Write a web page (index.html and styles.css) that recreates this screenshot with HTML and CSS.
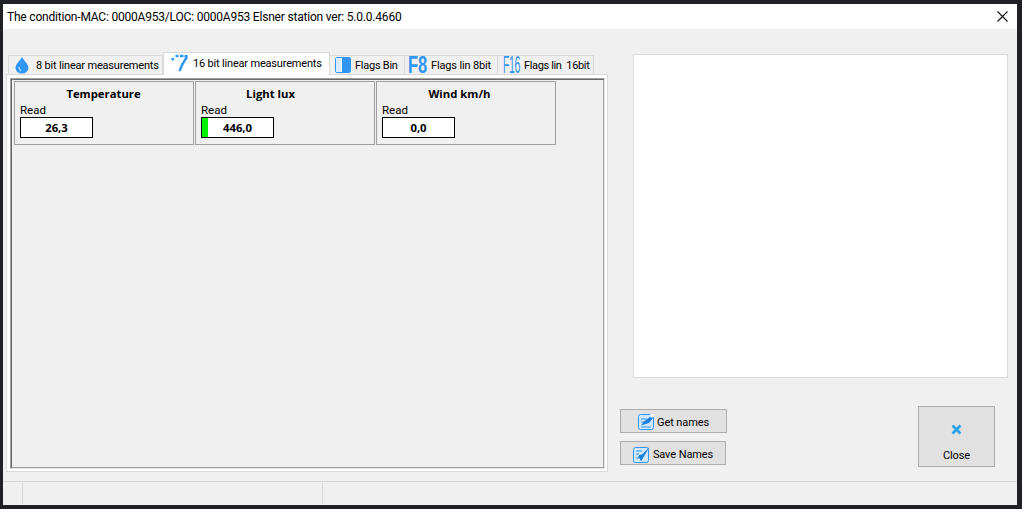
FILE: index.html
```html
<!DOCTYPE html>
<html lang="en">
<head>
<meta charset="utf-8">
<title>The condition</title>
<link rel="stylesheet" href="styles.css">
</head>
<body>
<div class="window">
  <header class="titlebar">
    <span class="title">The condition-MAC: 0000A953/LOC: 0000A953 Elsner station ver: 5.0.0.4660</span>
    <svg class="win-close" width="11" height="11" viewBox="0 0 11 11"><path d="M.5.5l10 10M10.500.5l-10 10" stroke="#111" stroke-width="1.1" fill="none"/></svg>
  </header>
  <main class="content">
    <section class="left">
      <nav class="tabs">
        <div class="tab tab-1">
          <svg class="ico" width="16" height="18" viewBox="0 0 16 18"><path d="M8 1C6 5 1.500 8 1.500 12a6.500 5.500 0 0 0 13 0C14.500 8 10 5 8 1z" fill="#2f96f3"/><path d="M5 11c0 2 1 3 2 4" stroke="#bfe0fb" stroke-width="1.200" fill="none"/></svg>
          <span>8 bit linear measurements</span>
        </div>
        <div class="tab tab-active">
          <svg class="ico" width="18" height="18" viewBox="0 0 18 18"><path d="M5.500 2h3M10 2h3.500M14.500 2.200h2v1.500L12.500 10l-3 7" stroke="#2f96f3" stroke-width="2.400" fill="none"/><path d="M1 4h3v2.500H2z" fill="#2f96f3"/></svg>
          <span>16 bit linear measurements</span>
        </div>
        <div class="tab tab-3">
          <svg class="ico" width="16" height="16" viewBox="0 0 16 16"><rect x=".5" y=".5" width="15" height="15" rx="1.500" fill="#fff" stroke="#2f96f3"/><rect x="7" y="1" width="8" height="14" fill="#2f96f3"/><rect x="1" y="1" width="5" height="14" fill="#d9ecfd"/></svg>
          <span>Flags Bin</span>
        </div>
        <div class="tab tab-4">
          <b class="flag-mark">F8</b>
          <span>Flags lin 8bit</span>
        </div>
        <div class="tab tab-5">
          <b class="flag-mark thin">F16</b>
          <span>Flags lin&nbsp;&nbsp;16bit</span>
        </div>
      </nav>
      <div class="page">
        <div class="sunken">
          <article class="card">
            <h2>Temperature</h2>
            <div class="lbl">Read</div>
            <div class="value">26,3</div>
          </article>
          <article class="card card-lux">
            <h2>Light lux</h2>
            <div class="lbl">Read</div>
            <div class="value"><i class="bar"></i>446,0</div>
          </article>
          <article class="card card-wind">
            <h2>Wind km/h</h2>
            <div class="lbl">Read</div>
            <div class="value">0,0</div>
          </article>
        </div>
      </div>
    </section>
    <aside class="right">
      <div class="preview"></div>
      <div class="actions">
        <div class="small-btns">
          <button class="btn get">
            <svg width="16" height="16" viewBox="0 0 16 16"><rect x=".5" y=".5" width="15" height="15" rx="2" fill="#cfe6fb" stroke="#2f96f3"/><path d="M3 5h6M3 8h3M3 13h10" stroke="#2f96f3"/><path d="M3 11.500l3-4 6-4.500 3 1-4 5-5 1.500z" fill="#1c7fe0"/><path d="M12 0h4v3h-2z" fill="#fff"/></svg>
            <span>Get names</span>
          </button>
          <button class="btn save">
            <svg width="17" height="17" viewBox="0 0 17 17"><rect x=".5" y="1.500" width="15" height="15" rx="2" fill="#cfe6fb" stroke="#2f96f3"/><path d="M3 5h6M3 8h3M3 12h3" stroke="#2f96f3"/><path d="M5 10l3 5L16.500 1l-7 7-1.500 2z" fill="#1c7fe0"/><path d="M6 9l2 6 4-7z" fill="#1c7fe0"/></svg>
            <span>Save Names</span>
          </button>
        </div>
        <button class="btn close">
          <svg width="11" height="11" viewBox="0 0 11 11"><path d="M1.500 1.500l8 8M9.500 1.500l-8 8" stroke="#29a3e8" stroke-width="2.600" fill="none"/></svg>
          <span>Close</span>
        </button>
      </div>
    </aside>
  </main>
  <footer class="status">
    <div class="cell c1"></div>
    <div class="cell c2"></div>
    <div class="cell c3"></div>
  </footer>
</div>
</body>
</html>
```
FILE: styles.css
```css
* { box-sizing: border-box; }
html, body { margin: 0; height: 100%; }
body {
  background: #202124;
  padding: 4px 5px 4px 3px;
  overflow: hidden;
  font-family: Roboto, "Open Sans", sans-serif;
  font-size: 11px;
  color: #000;
}
.window {
  height: 501px;
  background: #f0f0f0;
  display: flex;
  flex-direction: column;
}
.titlebar {
  height: 25px;
  flex: none;
  background: #fff;
  display: flex;
  align-items: center;
  justify-content: space-between;
  padding: 0 9px 0 4px;
}
.title { font-size: 12px; letter-spacing: -.2px; white-space: nowrap; }
.content {
  flex: 1;
  display: flex;
  min-height: 0;
}
.left {
  width: 602px;
  margin: 23px 0 0 3px;
  flex: none;
}
.tabs {
  display: flex;
  align-items: flex-end;
  height: 22px;
  padding-left: 2px;
}
.tab {
  height: 19px;
  display: flex;
  align-items: center;
  background: #f0f0f0;
  border: 1px solid #d9d9d9;
  border-bottom: 0;
  border-left-width: 0;
  white-space: nowrap;
  font-size: 11px;
  letter-spacing: -.18px;
}
.tab-1 { width: 155px; padding-left: 5px; border-left-width: 1px; gap: 6px; }
.tab-active {
  width: 167px;
  height: 23px;
  margin-bottom: -1px;
  position: relative;
  background: #fff;
  padding-left: 6px;
  padding-bottom: 2px;
  border-left-width: 1px;
  gap: 5px;
}
.tab-3 { width: 75px; padding-left: 5px; gap: 4px; letter-spacing: -.25px; }
.tab-4 { width: 93px; padding-left: 3px; gap: 5px; letter-spacing: -.15px; }
.tab-5 { width: 96px; padding-left: 5px; gap: 3px; letter-spacing: -.35px; }
.ico { flex: none; }
.flag-mark {
  color: #2f96f3;
  font-family: "Liberation Sans", sans-serif;
  font-size: 23px;
  line-height: 18px;
  flex: none;
  width: 18px;
  display: inline-block;
  white-space: nowrap;
  letter-spacing: 0;
  transform: scaleX(.72);
  transform-origin: left;
}
.flag-mark.thin { font-weight: 400; letter-spacing: -1px; transform: scaleX(.46); }
.page {
  height: 398px;
  background: #f0f0f0;
  border: 1px solid #d9d9d9;
  box-shadow: inset 0 0 0 3px #fff;
  padding: 3px;
}
.sunken {
  height: 391px;
  margin-right: -1px;
  border: 1px solid;
  border-color: #a0a0a0 #e3e3e3 #e3e3e3 #a0a0a0;
  box-shadow: inset 1px 1px 0 #696969, inset -1px -1px 0 #a0a0a0;
  padding: 2px 3px;
  display: flex;
  gap: 1px;
  align-items: flex-start;
}
.card {
  width: 180px;
  height: 64px;
  flex: none;
  border: 1px solid #a0a0a0;
  padding: 4px 6px 0 5px;
}
.card h2 {
  margin: 0;
  font-family: "Open Sans", sans-serif;
  font-size: 11.300px;
  font-weight: 700;
  line-height: 15px;
  text-align: center;
  height: 16px;
}
.card-lux h2 { padding-right: 28px; }
.card-wind h2 { padding-right: 12px; }
.lbl { font-size: 11.500px; line-height: 13px; margin-top: 2px; height: 13px; }
.value {
  width: 73px;
  height: 21px;
  background: #fff;
  border: 1px solid #000;
  font-family: "Open Sans", sans-serif;
  font-weight: 700;
  font-size: 11.300px;
  line-height: 19px;
  text-align: center;
  position: relative;
}
.bar {
  position: absolute;
  left: 0;
  top: 0;
  bottom: 0;
  width: 6px;
  background: #00f000;
}
.right {
  flex: 1;
  display: flex;
  flex-direction: column;
  padding-left: 12px;
  padding-top: 25px;
}
.preview {
  width: 375px;
  height: 324px;
  margin-left: 13px;
  background: #fff;
  border: 1px solid #dcdcdc;
  flex: none;
}
.actions {
  display: flex;
  justify-content: space-between;
  width: 375px;
  margin-top: 28px;
}
.small-btns {
  display: flex;
  flex-direction: column;
  gap: 8px;
  padding-top: 3px;
}
.btn {
  font: inherit;
  letter-spacing: -.1px;
  color: #000;
  background: #e1e1e1;
  border: 1px solid #adadad;
  padding: 2px 0 0;
  display: flex;
  align-items: center;
  justify-content: center;
}
.get { width: 107px; height: 24px; gap: 3px; }
.save { width: 106px; height: 24px; gap: 3px; }
.btn.close {
  width: 77px;
  height: 61px;
  flex-direction: column;
  gap: 14px;
  padding-top: 12px;
}
.status {
  height: 24px;
  flex: none;
  border-top: 1px solid #d9d9d9;
  display: flex;
  padding-top: 1px;
}
.cell { height: 21px; }
.c1 { width: 20px; border-right: 1px solid #d9d9d9; }
.c2 { width: 300px; border-right: 1px solid #d9d9d9; }
.c3 { flex: 1; }
```
